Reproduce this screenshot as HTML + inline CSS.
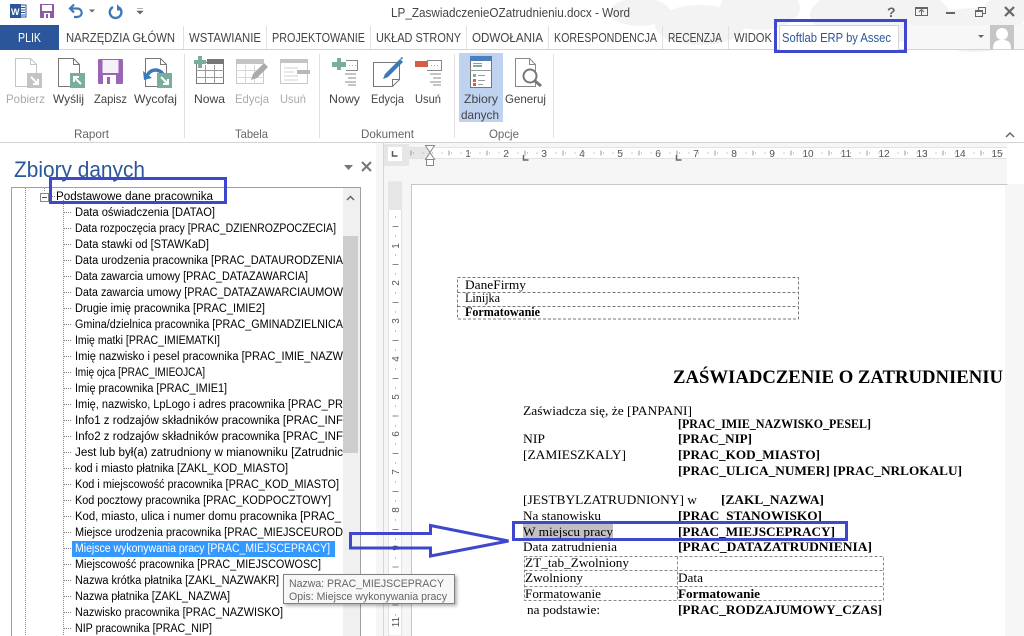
<!DOCTYPE html>
<html><head><meta charset="utf-8"><style>
html,body{margin:0;padding:0;background:#fff;overflow:hidden}
svg{display:block}
.s{font-family:"Liberation Sans",sans-serif}
.r{font:12px "Liberation Sans",sans-serif;fill:#444}
.t{font:12.5px "Liberation Sans",sans-serif;fill:#444}
.l{font:12px "Liberation Sans",sans-serif;fill:#666}
.n{font:11.5px "Liberation Sans",sans-serif;fill:#000}
.h{font:11px "Liberation Sans",sans-serif;fill:#666}
.d{font:12.5px "Liberation Serif",serif;fill:#000}
.b{font:bold 12.5px "Liberation Serif",serif;fill:#000}
.u{font:10px "Liberation Sans",sans-serif;fill:#555}
</style></head><body>
<svg width="1024" height="636" viewBox="0 0 1024 636" xmlns="http://www.w3.org/2000/svg">
<defs>
<clipPath id="tree"><rect x="12" y="188" width="331" height="448"/></clipPath>
<clipPath id="doc"><rect x="412" y="185" width="593" height="451"/></clipPath>
<filter id="sh" x="-10%" y="-20%" width="120%" height="150%"><feDropShadow dx="2" dy="2" stdDeviation="1.5" flood-color="#000" flood-opacity=".3"/></filter>
</defs>
<rect width="1024" height="636" fill="#fff"/>

<!-- title bar clouds -->
<g fill="#f3f3f3">
<ellipse cx="700" cy="25" rx="45" ry="20"/><ellipse cx="760" cy="8" rx="40" ry="22"/>
<ellipse cx="880" cy="15" rx="70" ry="28"/><ellipse cx="975" cy="30" rx="50" ry="22"/>
<ellipse cx="640" cy="12" rx="30" ry="14"/><ellipse cx="1015" cy="8" rx="30" ry="14"/>
</g>
<rect x="908" y="25" width="116" height="24" fill="#f7f7f7"/>

<!-- QAT -->
<rect x="18" y="5" width="8" height="12" fill="#fff" stroke="#2b579a"/>
<path d="M20 7.500h5M20 10h5M20 12.500h5M20 15h5" stroke="#2b579a"/>
<rect x="10" y="4" width="11" height="14" fill="#2b579a"/>
<text x="11" y="15" font-family="Liberation Sans" font-size="9" font-weight="bold" fill="#fff">W</text>
<rect x="40" y="4" width="14" height="14" fill="#8e5ba6"/><rect x="42" y="5" width="10" height="6" fill="#fff"/><rect x="44" y="13" width="6" height="5" fill="#fff"/><rect x="46" y="14" width="2" height="4" fill="#8e5ba6"/>
<path d="M74 4.500l-4 4 4 4" fill="none" stroke="#3b79b8" stroke-width="2.200"/><path d="M71 8.500h6c6 0 6.500 8 0 8.500h-3" fill="none" stroke="#3b79b8" stroke-width="2.200"/>
<path d="M89 9.500h6l-3 3z" fill="#666"/>
<path d="M113 7a5.800 5.800 0 1 0 6 .5" fill="none" stroke="#3b79b8" stroke-width="2.400"/><path d="M117 4v6.500h5.500z" fill="#3b79b8"/>
<path d="M137 8.500h6M137 11h6l-3 3z" fill="#666" stroke="#666" stroke-width=".6"/>

<text class="t" x="391" y="17" textLength="239" lengthAdjust="spacingAndGlyphs">LP_ZaswiadczenieOZatrudnieniu.docx - Word</text>

<!-- window buttons -->
<text x="887" y="17" font-family="Liberation Sans" font-size="14" font-weight="bold" fill="#666">?</text>
<rect x="915.500" y="7.500" width="12" height="8" fill="none" stroke="#666"/><rect x="915" y="7" width="13" height="2" fill="#666"/><path d="M921.500 15v-5M919 12l2.500-2.500 2.500 2.500" fill="none" stroke="#666"/>
<rect x="946" y="12" width="9" height="2" fill="#666"/>
<rect x="978.500" y="7.500" width="7" height="6" fill="none" stroke="#666"/><rect x="975.500" y="10.500" width="7" height="6" fill="#f3f3f3" stroke="#666"/><rect x="975" y="10" width="8" height="2" fill="#666"/>
<path d="M1005 7l9 9M1014 7l-9 9" stroke="#666" stroke-width="2.200"/>

<!-- tabs -->
<rect x="0" y="49" width="1024" height="1" fill="#d4d4d4"/>
<rect x="0" y="25" width="59" height="25" fill="#2b579a"/>
<text class="t" style="fill:#fff" x="18" y="42" textLength="23" lengthAdjust="spacingAndGlyphs">PLIK</text>
<g fill="#e1e1e1">
<rect x="183" y="26" width="1" height="23"/><rect x="266" y="26" width="1" height="23"/><rect x="370" y="26" width="1" height="23"/><rect x="466" y="26" width="1" height="23"/><rect x="548" y="26" width="1" height="23"/><rect x="662" y="26" width="1" height="23"/><rect x="728" y="26" width="1" height="23"/>
</g>
<text class="t" x="66" y="42" textLength="109" lengthAdjust="spacingAndGlyphs">NARZĘDZIA GŁÓWN</text>
<text class="t" x="189" y="42" textLength="72" lengthAdjust="spacingAndGlyphs">WSTAWIANIE</text>
<text class="t" x="272" y="42" textLength="93" lengthAdjust="spacingAndGlyphs">PROJEKTOWANIE</text>
<text class="t" x="376" y="42" textLength="85" lengthAdjust="spacingAndGlyphs">UKŁAD STRONY</text>
<text class="t" x="472" y="42" textLength="71" lengthAdjust="spacingAndGlyphs">ODWOŁANIA</text>
<text class="t" x="554" y="42" textLength="103" lengthAdjust="spacingAndGlyphs">KORESPONDENCJA</text>
<text class="t" x="668" y="42" textLength="54" lengthAdjust="spacingAndGlyphs">RECENZJA</text>
<text class="t" x="734" y="42" textLength="38" lengthAdjust="spacingAndGlyphs">WIDOK</text>
<path d="M779.500 50v-24.500h119v24.500" fill="#fff" stroke="#d4d4d4"/>
<rect x="780" y="49" width="118" height="2" fill="#fff"/>
<text class="t" style="fill:#2b579a" x="782" y="42" textLength="109" lengthAdjust="spacingAndGlyphs">Softlab ERP by Assec</text>
<path d="M978 35h6l-3 3z" fill="#666"/>
<rect x="990" y="25" width="24" height="24" fill="#c6c6c6"/>
<circle cx="1002" cy="34" r="6" fill="#fff"/><path d="M993 49c0-8 4-9 9-9s9 1 9 9z" fill="#fff"/>

<!-- ribbon -->
<rect x="0" y="142" width="1024" height="1" fill="#d4d4d4"/>
<g fill="#e1e1e1"><rect x="184" y="54" width="1" height="84"/><rect x="319" y="54" width="1" height="84"/><rect x="454" y="54" width="1" height="84"/><rect x="553" y="54" width="1" height="84"/></g>
<rect x="459" y="53" width="44" height="69" fill="#bfd3f1"/>

<!-- Pobierz -->
<path d="M15.500 58.500h15l6 6v22h-21z" fill="#fff" stroke="#c4c4c4"/><path d="M30.500 58.500v6h6" fill="none" stroke="#c4c4c4"/>
<rect x="27" y="73" width="15" height="15" fill="#c4c4c4"/><path d="M31 77l7 7M38 79v5h-5" fill="none" stroke="#fff" stroke-width="2"/>
<!-- Wyslij -->
<path d="M58.500 58.500h15l6 6v22h-21z" fill="#fff" stroke="#777"/><path d="M73.500 58.500v6h6" fill="none" stroke="#777"/>
<rect x="70" y="73" width="15" height="15" fill="#79ad9c"/><path d="M81 84l-7-7M74 82v-5h5" fill="none" stroke="#fff" stroke-width="2"/>
<!-- Zapisz -->
<rect x="98" y="59" width="25" height="25" rx="1" fill="#9b64b4"/><rect x="102.500" y="60" width="16" height="13" fill="#f6f0f8"/><rect x="103" y="75" width="13" height="9" fill="#fff"/><rect x="107" y="77" width="3" height="7" fill="#9b64b4"/>
<!-- Wycofaj -->
<path d="M145.500 58.500h15l6 6v22h-21z" fill="#fff" stroke="#777"/><path d="M160.500 58.500v6h6" fill="none" stroke="#777"/>
<path d="M147 76c3-7 11-8 16-2" fill="none" stroke="#3b79b8" stroke-width="3.500"/><path d="M143 71l1 9 8-2z" fill="#3b79b8"/>
<rect x="157" y="73" width="15" height="15" fill="#79ad9c"/><path d="M161 77l7 7M168 79v5h-5" fill="none" stroke="#fff" stroke-width="2"/>

<!-- Nowa -->
<rect x="196.500" y="62.500" width="27" height="21" fill="#fff" stroke="#777"/><rect x="207" y="59" width="17" height="5" fill="#777"/>
<path d="M196 70.500h28M196 77.500h28M205.500 65v19M214.500 65v19" stroke="#999" fill="none"/>
<rect x="198" y="56" width="4" height="12" fill="#79ad9c"/><rect x="194" y="60" width="12" height="4" fill="#79ad9c"/>
<!-- Edycja tabela -->
<rect x="236.500" y="60.500" width="27" height="23" fill="#fff" stroke="#c8c8c8"/><rect x="236" y="59" width="28" height="5" fill="#c4c4c4"/>
<path d="M236 70.500h28M236 77.500h28M245.500 65v19M254.500 65v19" stroke="#d8d8d8" fill="none"/>
<path d="M251 80l2-6 11-11 4 4-11 11z" fill="#aaa"/>
<!-- Usun tabela -->
<rect x="280.500" y="60.500" width="27" height="23" fill="#fff" stroke="#c8c8c8"/><rect x="280" y="59" width="28" height="4" fill="#c4c4c4"/>
<path d="M284 68h14M284 72h10M284 76h14M284 80h14" stroke="#d0d0d0"/><rect x="297" y="70" width="13" height="4" fill="#b8b8b8"/>

<!-- Nowy -->
<path d="M346 60.500h11.500v10h-11.500" fill="#fff" stroke="#888"/><path d="M349 65.500h7" stroke="#aaa" stroke-dasharray="1 2"/>
<rect x="332" y="62" width="14" height="5" fill="#79ad9c"/><rect x="337" y="58" width="4" height="12" fill="#79ad9c"/>
<path d="M345 74h11M348 78h8M345 82h11M348 85h8" stroke="#888"/>
<!-- Edycja dok -->
<path d="M373.500 62.500h26v17l-7 7h-19z" fill="#fff" stroke="#777"/><path d="M392.500 86.500v-7h7" fill="none" stroke="#777"/>
<path d="M385 74l15-15 3 3-15 15-5 2z" fill="#3b79b8"/><path d="M400 58l3-1-1 3z" fill="#3b79b8"/>
<!-- Usun dok -->
<path d="M427 60.500h14.500v10h-14.500" fill="#fff" stroke="#888"/><path d="M431 65.500h8" stroke="#aaa" stroke-dasharray="1 2"/>
<rect x="415" y="61" width="13" height="6" fill="#d75f41"/>
<path d="M430 74h11M433 78h8M430 82h11M433 85h8" stroke="#888"/>
<!-- Zbiory -->
<rect x="470.500" y="56.500" width="21" height="31" fill="#fff" stroke="#777"/><rect x="470" y="56" width="22" height="5" fill="#4b7fbc"/>
<path d="M473 63.500h9" stroke="#999"/><rect x="473" y="65" width="9" height="2" fill="#79ad9c"/><path d="M470 70.500h22" stroke="#999"/>
<rect x="473" y="74" width="3" height="3" fill="#79ad9c"/><rect x="473" y="79" width="3" height="3" fill="#d75f41"/><rect x="473" y="83" width="3" height="3" fill="#d75f41"/>
<path d="M478 75.500h7M478 80.500h7M478 84.500h5" stroke="#999"/>
<!-- Generuj -->
<path d="M515.500 58.500h14l6 6v22h-20z" fill="#fff" stroke="#888"/><path d="M529.500 58.500v6h6" fill="none" stroke="#888"/>
<circle cx="530" cy="76" r="6.500" fill="#fff" stroke="#777" stroke-width="2"/><path d="M535 81l6 5" stroke="#777" stroke-width="3"/>

<!-- ribbon labels -->
<text class="r" style="fill:#aaa" x="6" y="103" textLength="39" lengthAdjust="spacingAndGlyphs">Pobierz</text>
<text class="r" x="53" y="103" textLength="31" lengthAdjust="spacingAndGlyphs">Wyślij</text>
<text class="r" x="94" y="103" textLength="33" lengthAdjust="spacingAndGlyphs">Zapisz</text>
<text class="r" x="134" y="103" textLength="43" lengthAdjust="spacingAndGlyphs">Wycofaj</text>
<text class="r" x="194" y="103" textLength="31" lengthAdjust="spacingAndGlyphs">Nowa</text>
<text class="r" style="fill:#aaa" x="235" y="103" textLength="34" lengthAdjust="spacingAndGlyphs">Edycja</text>
<text class="r" style="fill:#aaa" x="280" y="103" textLength="26" lengthAdjust="spacingAndGlyphs">Usuń</text>
<text class="r" x="329" y="103" textLength="31" lengthAdjust="spacingAndGlyphs">Nowy</text>
<text class="r" x="371" y="103" textLength="33" lengthAdjust="spacingAndGlyphs">Edycja</text>
<text class="r" x="415" y="103" textLength="26" lengthAdjust="spacingAndGlyphs">Usuń</text>
<text class="r" x="464" y="103" textLength="34" lengthAdjust="spacingAndGlyphs">Zbiory</text>
<text class="r" x="461" y="119" textLength="38" lengthAdjust="spacingAndGlyphs">danych</text>
<text class="r" x="505" y="103" textLength="41" lengthAdjust="spacingAndGlyphs">Generuj</text>
<text class="l" x="74" y="138" textLength="35" lengthAdjust="spacingAndGlyphs">Raport</text>
<text class="l" x="235" y="138" textLength="33" lengthAdjust="spacingAndGlyphs">Tabela</text>
<text class="l" x="361" y="138" textLength="53" lengthAdjust="spacingAndGlyphs">Dokument</text>
<text class="l" x="489" y="138" textLength="30" lengthAdjust="spacingAndGlyphs">Opcje</text>
<path d="M1006 137l4-4 4 4" fill="none" stroke="#666" stroke-width="1.500"/>

<!-- task pane -->
<text class="s" x="14" y="177" font-size="22" fill="#2b579a" textLength="131" lengthAdjust="spacingAndGlyphs">Zbiory danych</text>
<path d="M344 165h9l-4.500 5z" fill="#777"/>
<path d="M362 162l9 9M371 162l-9 9" stroke="#777" stroke-width="2"/>
<rect x="11.500" y="187.500" width="349" height="460" fill="#fff" stroke="#a0a0a0"/>
<rect x="343" y="188" width="17" height="448" fill="#f0f0f0"/>
<rect x="343" y="236" width="15" height="217" fill="#cdcdcd"/>
<path d="M347 200l3.500-3.500 3.500 3.500" fill="none" stroke="#666" stroke-width="1.500"/>
<path d="M25.500 188v448" stroke="#888" stroke-dasharray="1 1"/>
<path d="M63.500 200v436" stroke="#888" stroke-dasharray="1 1"/>
<path d="M44.500 188v3M50 196.500h5" stroke="#888" stroke-dasharray="1 1"/>
<rect x="40.500" y="193.500" width="8" height="8" fill="#fff" stroke="#888"/><path d="M42 197.500h5" stroke="#555"/>
<path d="M64 212.500h8M64 228.500h8M64 244.500h8M64 260.500h8M64 276.500h8M64 292.500h8M64 308.500h8M64 324.500h8M64 340.500h8M64 356.500h8M64 372.500h8M64 388.500h8M64 404.500h8M64 420.500h8M64 436.500h8M64 452.500h8M64 468.500h8M64 484.500h8M64 500.500h8M64 516.500h8M64 532.500h8M64 548.500h8M64 564.500h8M64 580.500h8M64 596.500h8M64 612.500h8M64 628.500h8" stroke="#777" stroke-dasharray="1 1"/>
<rect x="72" y="541" width="263" height="16" fill="#3399ff"/>
<g clip-path="url(#tree)">
<text class="n" x="56" y="200" textLength="157" lengthAdjust="spacingAndGlyphs">Podstawowe dane pracownika</text>
<text class="n" x="75" y="216" textLength="140" lengthAdjust="spacingAndGlyphs">Data oświadczenia [DATAO]</text>
<text class="n" x="75" y="232" textLength="261" lengthAdjust="spacingAndGlyphs">Data rozpoczęcia pracy [PRAC_DZIENROZPOCZECIA]</text>
<text class="n" x="75" y="248" textLength="134" lengthAdjust="spacingAndGlyphs">Data stawki od [STAWKaD]</text>
<text class="n" x="75" y="264" textLength="268" lengthAdjust="spacingAndGlyphs">Data urodzenia pracownika [PRAC_DATAURODZENIA</text>
<text class="n" x="75" y="280" textLength="233" lengthAdjust="spacingAndGlyphs">Data zawarcia umowy [PRAC_DATAZAWARCIA]</text>
<text class="n" x="75" y="296" textLength="268" lengthAdjust="spacingAndGlyphs">Data zawarcia umowy [PRAC_DATAZAWARCIAUMOW</text>
<text class="n" x="75" y="312" textLength="190" lengthAdjust="spacingAndGlyphs">Drugie imię pracownika [PRAC_IMIE2]</text>
<text class="n" x="75" y="328" textLength="268" lengthAdjust="spacingAndGlyphs">Gmina/dzielnica pracownika [PRAC_GMINADZIELNICA</text>
<text class="n" x="75" y="344" textLength="145" lengthAdjust="spacingAndGlyphs">Imię matki [PRAC_IMIEMATKI]</text>
<text class="n" x="75" y="360" textLength="268" lengthAdjust="spacingAndGlyphs">Imię nazwisko i pesel pracownika [PRAC_IMIE_NAZW</text>
<text class="n" x="75" y="376" textLength="130" lengthAdjust="spacingAndGlyphs">Imię ojca [PRAC_IMIEOJCA]</text>
<text class="n" x="75" y="392" textLength="152" lengthAdjust="spacingAndGlyphs">Imię pracownika [PRAC_IMIE1]</text>
<text class="n" x="75" y="408" textLength="268" lengthAdjust="spacingAndGlyphs">Imię, nazwisko, LpLogo i adres pracownika [PRAC_PR</text>
<text class="n" x="75" y="424" textLength="268" lengthAdjust="spacingAndGlyphs">Info1 z rodzajów składników pracownika [PRAC_INF</text>
<text class="n" x="75" y="440" textLength="268" lengthAdjust="spacingAndGlyphs">Info2 z rodzajów składników pracownika [PRAC_INF</text>
<text class="n" x="75" y="456" textLength="268" lengthAdjust="spacingAndGlyphs">Jest lub był(a) zatrudniony w mianowniku [Zatrudnic</text>
<text class="n" x="75" y="472" textLength="213" lengthAdjust="spacingAndGlyphs">kod i miasto płatnika [ZAKL_KOD_MIASTO]</text>
<text class="n" x="75" y="488" textLength="264" lengthAdjust="spacingAndGlyphs">Kod i miejscowość pracownika [PRAC_KOD_MIASTO]</text>
<text class="n" x="75" y="504" textLength="256" lengthAdjust="spacingAndGlyphs">Kod pocztowy pracownika [PRAC_KODPOCZTOWY]</text>
<text class="n" x="75" y="520" textLength="266" lengthAdjust="spacingAndGlyphs">Kod, miasto, ulica i numer domu pracownika [PRAC_</text>
<text class="n" x="75" y="536" textLength="268" lengthAdjust="spacingAndGlyphs">Miejsce urodzenia pracownika [PRAC_MIEJSCEUROD</text>
<text class="n" style="fill:#fff" x="75" y="552" textLength="255" lengthAdjust="spacingAndGlyphs">Miejsce wykonywania pracy [PRAC_MIEJSCEPRACY]</text>
<text class="n" x="75" y="568" textLength="246" lengthAdjust="spacingAndGlyphs">Miejscowość pracownika [PRAC_MIEJSCOWOSC]</text>
<text class="n" x="75" y="584" textLength="204" lengthAdjust="spacingAndGlyphs">Nazwa krótka płatnika [ZAKL_NAZWAKR]</text>
<text class="n" x="75" y="600" textLength="155" lengthAdjust="spacingAndGlyphs">Nazwa płatnika [ZAKL_NAZWA]</text>
<text class="n" x="75" y="616" textLength="208" lengthAdjust="spacingAndGlyphs">Nazwisko pracownika [PRAC_NAZWISKO]</text>
<text class="n" x="75" y="632" textLength="137" lengthAdjust="spacingAndGlyphs">NIP pracownika [PRAC_NIP]</text>
</g>

<!-- document area -->
<rect x="376" y="143" width="648" height="493" fill="#f6f6f6"/>
<rect x="1007" y="143" width="17" height="41" fill="#fff"/>
<path d="M383.500 143v493" stroke="#d8d8d8"/>
<rect x="384" y="144" width="25" height="22" fill="#e6e6e6"/>
<rect x="388" y="147" width="14" height="14" fill="#fff"/>
<path d="M392.500 151v5h5" fill="none" stroke="#555" stroke-width="1.500"/>
<rect x="409" y="147" width="598" height="11" fill="#fff" stroke="none"/>
<rect x="409" y="147" width="21" height="11" fill="#e6e6e6"/>
<path d="M409 147.500h598M409 158.500h598" stroke="#e2e2e2"/>
<path d="M412 153h595" stroke="#999" stroke-dasharray="1 8.500" stroke-dashoffset="-1"/>
<path d="M411 150.500v5" stroke="#999"/>
<path d="M449 150.500v5M487 150.500v5M525 150.500v5M563 150.500v5M601 150.500v5M639 150.500v5M677 150.500v5M715 150.500v5M753 150.500v5M791 150.500v5M829 150.500v5M867 150.500v5M905 150.500v5M943 150.500v5M981 150.500v5" stroke="#999"/>
<g class="u" text-anchor="middle">
<text x="468" y="157">1</text><text x="506" y="157">2</text><text x="544" y="157">3</text><text x="582" y="157">4</text><text x="620" y="157">5</text><text x="658" y="157">6</text><text x="696" y="157">7</text><text x="734" y="157">8</text><text x="772" y="157">9</text><text x="808" y="157">10</text><text x="846" y="157">11</text><text x="884" y="157">12</text><text x="922" y="157">13</text><text x="960" y="157">14</text><text x="997" y="157">15</text>
</g>
<path d="M425.500 145.500h9l-4.500 7 4.500 7h-9l4.500-7z" fill="#fff" stroke="#888"/><rect x="426.500" y="159.500" width="7" height="6" fill="#fff" stroke="#888"/>
<path d="M523.500 155v5h5M676.500 155v5h5" fill="none" stroke="#666" stroke-width="1.500"/>

<!-- vertical ruler -->
<rect x="388.500" y="182" width="13" height="454" fill="#fff" stroke="#e2e2e2"/>
<rect x="388" y="182" width="14" height="28" fill="#e6e6e6"/>
<path d="M395.500 217h.01M393 226.500h5M395.500 236h.01M395.500 255h.01M393 264.500h5M395.500 274h.01M395.500 293h.01M393 302.500h5M395.500 312h.01M395.500 331h.01M393 340.500h5M395.500 350h.01M395.500 369h.01M393 378.500h5M395.500 388h.01M395.500 406h.01M393 416h5M395.500 426h.01M395.500 444h.01M393 453.500h5M395.500 463h.01M395.500 482h.01M393 491.500h5M395.500 501h.01M395.500 520h.01M393 529.500h5M395.500 539h.01M395.500 558h.01M393 567h5M395.500 577h.01M395.500 595h.01M393 605h5M395.500 615h.01" stroke="#888" stroke-linecap="square"/>
<g class="u" text-anchor="middle">
<text transform="translate(399 246) rotate(-90)">1</text><text transform="translate(399 283) rotate(-90)">2</text><text transform="translate(399 321) rotate(-90)">3</text><text transform="translate(399 359) rotate(-90)">4</text><text transform="translate(399 397) rotate(-90)">5</text><text transform="translate(399 434) rotate(-90)">6</text><text transform="translate(399 472) rotate(-90)">7</text><text transform="translate(399 510) rotate(-90)">8</text><text transform="translate(399 548) rotate(-90)">9</text><text transform="translate(399 585) rotate(-90)">10</text><text transform="translate(399 622) rotate(-90)">11</text>
</g>

<!-- page -->
<rect x="411" y="184" width="594" height="452" fill="#fff"/>
<path d="M411.500 636v-451.500h596" fill="none" stroke="#c6c6c6"/>
<g clip-path="url(#doc)">
<path d="M457.500 277.500h341v41.500h-341zM457.500 292.500h341M457.500 306.500h341" fill="none" stroke="#777" stroke-dasharray="3 2"/>
<text class="d" x="465" y="289" textLength="61" lengthAdjust="spacingAndGlyphs">DaneFirmy</text>
<text class="d" x="465" y="302" textLength="35" lengthAdjust="spacingAndGlyphs">Linijka</text>
<text class="b" x="465" y="316" textLength="75" lengthAdjust="spacingAndGlyphs">Formatowanie</text>
<text class="b" style="font-size:18.500px" x="673" y="383" textLength="330" lengthAdjust="spacingAndGlyphs">ZAŚWIADCZENIE O ZATRUDNIENIU</text>
<text class="d" x="523" y="415" textLength="169" lengthAdjust="spacingAndGlyphs">Zaświadcza się, że [PANPANI]</text>
<text class="b" x="678" y="428" textLength="193" lengthAdjust="spacingAndGlyphs">[PRAC_IMIE_NAZWISKO_PESEL]</text>
<text class="d" x="523" y="443" textLength="22" lengthAdjust="spacingAndGlyphs">NIP</text>
<text class="b" x="678" y="443" textLength="74" lengthAdjust="spacingAndGlyphs">[PRAC_NIP]</text>
<text class="d" x="523" y="459" textLength="103" lengthAdjust="spacingAndGlyphs">[ZAMIESZKALY]</text>
<text class="b" x="678" y="459" textLength="142" lengthAdjust="spacingAndGlyphs">[PRAC_KOD_MIASTO]</text>
<text class="b" x="678" y="475" textLength="284" lengthAdjust="spacingAndGlyphs">[PRAC_ULICA_NUMER] [PRAC_NRLOKALU]</text>
<text class="d" x="523" y="504" textLength="174" lengthAdjust="spacingAndGlyphs">[JESTBYLZATRUDNIONY] w</text>
<text class="b" x="721" y="504" textLength="103" lengthAdjust="spacingAndGlyphs">[ZAKL_NAZWA]</text>
<text class="d" x="523" y="520" textLength="78" lengthAdjust="spacingAndGlyphs">Na stanowisku</text>
<text class="b" x="678" y="520" textLength="144" lengthAdjust="spacingAndGlyphs">[PRAC_STANOWISKO]</text>
<rect x="523" y="524" width="90" height="14" fill="#c0c0c0"/>
<text class="d" x="523" y="536" textLength="90" lengthAdjust="spacingAndGlyphs">W miejscu pracy</text>
<text class="b" x="678" y="536" textLength="157" lengthAdjust="spacingAndGlyphs">[PRAC_MIEJSCEPRACY]</text>
<text class="d" x="523" y="551" textLength="94" lengthAdjust="spacingAndGlyphs">Data zatrudnienia</text>
<text class="b" x="678" y="551" textLength="194" lengthAdjust="spacingAndGlyphs">[PRAC_DATAZATRUDNIENIA]</text>
<path d="M524.500 556.500h359v44h-359zM524.500 570.500h359M524.500 586.500h359M677.500 556.500v44" fill="none" stroke="#888" stroke-dasharray="3 2"/>
<text class="d" x="525" y="567" textLength="104" lengthAdjust="spacingAndGlyphs">ZT_tab_Zwolniony</text>
<text class="d" x="525" y="582" textLength="58" lengthAdjust="spacingAndGlyphs">Zwolniony</text>
<text class="d" x="678" y="582" textLength="25" lengthAdjust="spacingAndGlyphs">Data</text>
<text class="d" x="525" y="598" textLength="76" lengthAdjust="spacingAndGlyphs">Formatowanie</text>
<text class="b" x="678" y="598" textLength="82" lengthAdjust="spacingAndGlyphs">Formatowanie</text>
<text class="d" x="527" y="614" textLength="73" lengthAdjust="spacingAndGlyphs">na podstawie:</text>
<text class="b" x="678" y="614" textLength="204" lengthAdjust="spacingAndGlyphs">[PRAC_RODZAJUMOWY_CZAS]</text>
</g>

<!-- tooltip -->
<rect x="283.500" y="574.500" width="171" height="29" fill="#f7f7f7" stroke="#808080" filter="url(#sh)"/>
<text class="h" x="289" y="587" textLength="155" lengthAdjust="spacingAndGlyphs">Nazwa: PRAC_MIEJSCEPRACY</text>
<text class="h" x="289" y="600" textLength="158" lengthAdjust="spacingAndGlyphs">Opis: Miejsce wykonywania pracy</text>

<!-- annotations -->
<g fill="none" stroke="#3f48cc" stroke-width="3">
<rect x="775.500" y="20.500" width="130" height="31"/>
<rect x="50.500" y="178.500" width="175" height="24"/>
<rect x="513.500" y="522.500" width="333" height="17"/>
<path d="M350.500 533.500h80v-8l78 15.500-78 15v-8h-80z" stroke-width="3"/>
</g>
</svg>
</body></html>
